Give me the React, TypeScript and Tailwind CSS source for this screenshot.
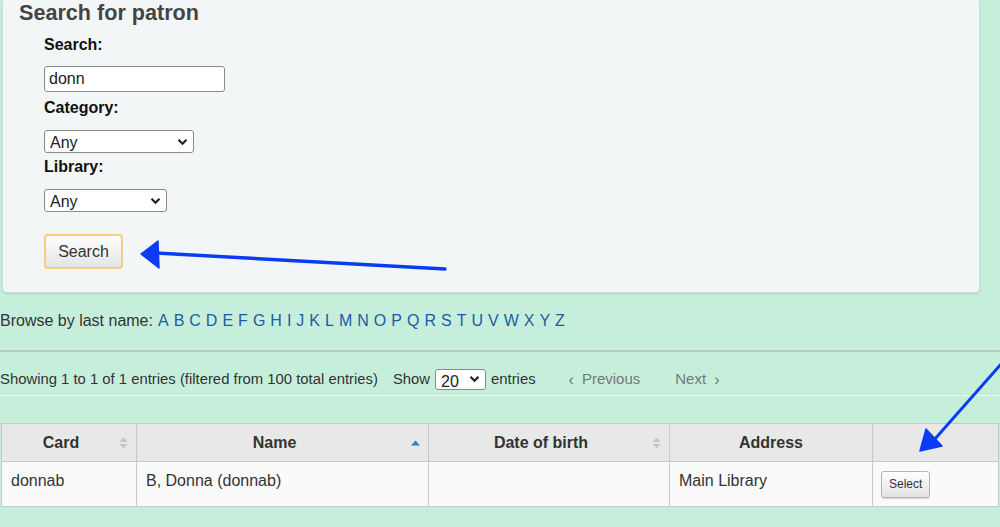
import { ReactNode } from 'react';

const letters = 'ABCDEFGHIJKLMNOPQRSTUVWXYZ'.split('');

function Chevron() {
  return (
    <svg width="11" height="8" viewBox="0 0 11 8" className="pointer-events-none absolute right-[6px] top-1/2 -translate-y-1/2">
      <path d="M1.5 1.8 L5.5 5.8 L9.5 1.8" fill="none" stroke="#222" strokeWidth="2.2" />
    </svg>
  );
}

function FakeSelect({ value, w, h = 23, size = 'text-[16px]' }: { value: string; w: number; h?: number; size?: string }) {
  return (
    <span className="relative inline-block align-middle" style={{ width: w, height: h }}>
      <select
        defaultValue={value}
        className={`h-full w-full appearance-none rounded-[3px] border border-[#8a8a8a] bg-white pl-[5px] text-[#222] ${size}`}
      >
        <option>{value}</option>
      </select>
      <Chevron />
    </span>
  );
}

function SortIcon({ kind }: { kind: 'both' | 'asc' }) {
  if (kind === 'asc') {
    return (
      <svg width="9" height="6" viewBox="0 0 9 6" className="absolute right-[8px] top-1/2 -translate-y-1/2">
        <path d="M0 5.5 L4.5 0.5 L9 5.5 Z" fill="#3a78c9" />
      </svg>
    );
  }
  return (
    <svg width="9" height="12" viewBox="0 0 9 12" className="absolute right-[8px] top-1/2 -translate-y-1/2">
      <path d="M0.5 5 L4.5 0.5 L8.5 5 Z" fill="#c4c4c4" />
      <path d="M0.5 7 L4.5 11.5 L8.5 7 Z" fill="#c4c4c4" />
    </svg>
  );
}

function Th({ w, children, sort }: { w: number; children?: ReactNode; sort?: 'both' | 'asc' }) {
  return (
    <th
      style={{ width: w }}
      className={`relative h-[38px] border border-[#c9c9c9] bg-[#e8e8e8] text-center text-[16px] font-bold text-[#333] ${sort ? 'pr-[16px]' : ''}`}
    >
      {children}
      {sort && <SortIcon kind={sort} />}
    </th>
  );
}

export default function App() {
  return (
    <div className="relative h-[527px] w-[1000px] overflow-hidden bg-[#c6efdb] font-['Liberation_Sans',Arial,sans-serif] text-[#222]">
      {/* search panel */}
      <div className="ml-[2px] mr-[20px] rounded-b-[5px] border-x border-b border-[#cfdcdf] bg-[#f3f6f7] pb-[23px] shadow-[0_1px_2px_rgba(0,0,0,0.12)]">
        <h1 className="h-[26px] pl-[16px] text-[21.6px] font-bold leading-[26px] text-[#444]">Search for patron</h1>
        <div className="pl-[41px]">
          <div className="mt-[10px] text-[16px] font-bold leading-[18px] text-[#111]">Search:</div>
          <input
            defaultValue="donn"
            className="mt-[12px] block h-[26px] w-[181px] rounded-[3px] border border-[#8a8a8a] bg-white px-[4px] text-[16px] text-[#222]"
          />
          <div className="mt-[7px] text-[16px] font-bold leading-[18px] text-[#111]">Category:</div>
          <div className="mt-[13px] flex">
            <FakeSelect value="Any" w={150} />
          </div>
          <div className="mt-[5px] text-[16px] font-bold leading-[18px] text-[#111]">Library:</div>
          <div className="mt-[13px] flex">
            <FakeSelect value="Any" w={123} />
          </div>
          <button className="mt-[22px] block h-[35px] w-[79px] rounded-[4px] border-2 border-[#f2cf7f] bg-gradient-to-b from-white to-[#e4e4e4] text-[16px] text-[#333]">
            Search
          </button>
        </div>
      </div>

      {/* browse */}
      <div className="mt-[19px] flex h-[18px] items-center text-[16px] leading-[18px] text-[#333]">
        <span>Browse by last name:</span>
        <span className="ml-[5px] flex gap-[5px] text-[#1f5aa6]">
          {letters.map((l) => (
            <a key={l} href="#" className="cursor-pointer">
              {l}
            </a>
          ))}
        </span>
      </div>

      <div className="mt-[20px] border-t-2 border-[#bcc8c2]" />

      {/* info / pager */}
      <div className="flex h-[43px] items-center pt-[12px] text-[14.85px] text-[#333]">
        <span>Showing 1 to 1 of 1 entries (filtered from 100 total entries)</span>
        <span className="ml-[15px] flex items-center gap-[5px]">
          <span>Show</span>
          <FakeSelect value="20" w={51} h={21} size="text-[16px]" />
          <span>entries</span>
        </span>
        <span className="ml-[33px] flex items-center text-[15px] text-[#777]">
          <span className="mr-[8px] text-[16px]">‹</span>Previous
        </span>
        <span className="ml-[35px] flex items-center text-[15px] text-[#777]">
          Next<span className="ml-[8px] text-[16px]">›</span>
        </span>
      </div>
      <div className="border-t border-[#e6f7ee]" />

      {/* results */}
      <table className="ml-[1px] mt-[27px] w-[997px] table-fixed border-collapse">
        <thead>
          <tr>
            <Th w={135} sort="both">Card</Th>
            <Th w={292} sort="asc">Name</Th>
            <Th w={241} sort="both">Date of birth</Th>
            <Th w={203}>Address</Th>
            <Th w={126} />
          </tr>
        </thead>
        <tbody>
          <tr className="h-[45px] bg-[#fafafa] text-[16px] text-[#333]">
            <td className="border border-[#c9c9c9] pb-[6px] pl-[9px]">donnab</td>
            <td className="border border-[#c9c9c9] pb-[6px] pl-[9px]">B, Donna (donnab)</td>
            <td className="border border-[#c9c9c9]" />
            <td className="border border-[#c9c9c9] pb-[6px] pl-[9px]">Main Library</td>
            <td className="border border-[#c9c9c9] pl-[8px]">
              <button className="h-[27px] rounded-[3px] border border-[#b5b5b5] bg-gradient-to-b from-white to-[#e2e2e2] px-[7px] text-[12px] text-[#333] shadow-[0_1px_1px_rgba(0,0,0,0.15)]">
                Select
              </button>
            </td>
          </tr>
        </tbody>
      </table>

      {/* hand-drawn annotation arrows */}
      <svg className="pointer-events-none absolute left-0 top-0" width="1000" height="527" viewBox="0 0 1000 527">
        <path d="M445 269 C 360 264, 260 258, 156 253" fill="none" stroke="#0b3cf5" strokeWidth="3.4" strokeLinecap="round" />
        <path d="M141 254 L158 241 L159 268 Z" fill="#0b3cf5" stroke="#0b3cf5" strokeWidth="1.5" strokeLinejoin="round" />
        <path d="M1002 363 L934 440" fill="none" stroke="#0b3cf5" strokeWidth="3" strokeLinecap="round" />
        <path d="M920 451 L926 429 L942 446 Z" fill="#0b3cf5" stroke="#0b3cf5" strokeWidth="1.5" strokeLinejoin="round" />
      </svg>
    </div>
  );
}
